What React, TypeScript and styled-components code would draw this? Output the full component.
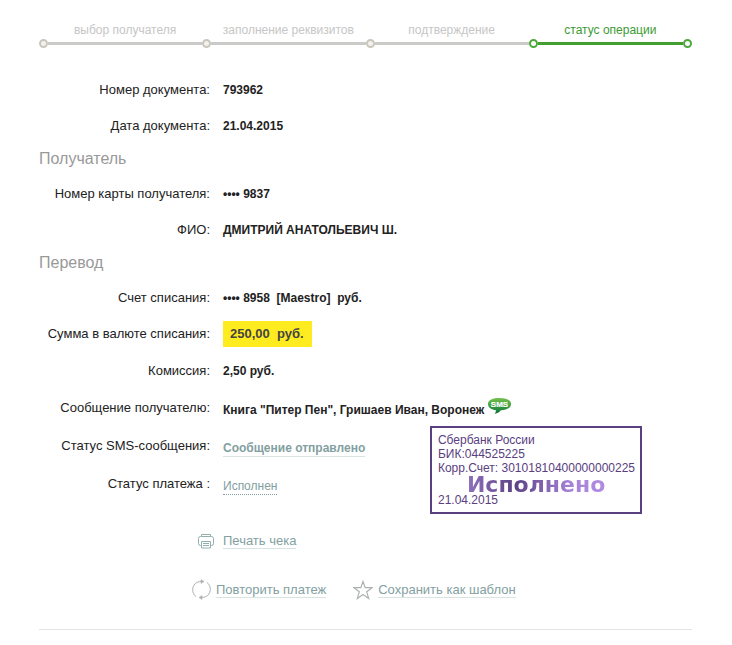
import React from 'react';
import styled, { createGlobalStyle, css } from 'styled-components';

const GlobalStyle = createGlobalStyle`
  * { box-sizing: border-box; }
  body {
    margin: 0;
    background: #ffffff;
    color: #222222;
    font-family: "Liberation Sans", Arial, sans-serif;
    font-size: 13px;
    line-height: 16px;
  }
`;

const Page = styled.main`
  padding: 22px 40px 16px 39px;
`;

const Stepper = styled.ol`
  display: grid;
  grid-template-columns: repeat(4, 1fr);
  margin: 0 0 24px;
  padding: 0;
  list-style: none;
`;

const StepItem = styled.li<{ $active: boolean }>`
  color: ${(p) => (p.$active ? '#3c9a32' : '#c6c6c6')};
  font-size: 12px;
`;

const StepLabel = styled.div<{ $active: boolean }>`
  padding-left: ${(p) => (p.$active ? 0 : 9)}px;
  text-align: center;
`;

const Track = styled.div<{ $active: boolean }>`
  display: flex;
  align-items: center;
  height: 10px;
  color: ${(p) => (p.$active ? '#429f30' : '#cacac8')};
`;

const Dot = styled.span<{ $active: boolean }>`
  flex: none;
  width: 9px;
  height: 9px;
  border: 2px solid ${(p) => (p.$active ? '#4da83c' : '#c9c6bb')};
  border-radius: 50%;
  background: ${(p) => (p.$active ? '#ffffff' : '#f2f1ee')};
`;

const Line = styled.span`
  flex: 1;
  height: 3px;
  background: currentColor;
`;

const Fields = styled.dl`
  margin: 0;
`;

const StatusFields = styled(Fields)`
  padding-top: 1px;
`;

const Row = styled.div<{ $tall?: boolean }>`
  display: grid;
  grid-template-columns: 171px 1fr;
  column-gap: 13px;
  align-items: center;
  min-height: ${(p) => (p.$tall ? 38 : 36)}px;
`;

const Label = styled.dt`
  text-align: right;
  white-space: nowrap;
`;

const Value = styled.dd<{ $low?: boolean }>`
  margin: 0;
  padding-top: ${(p) => (p.$low ? 4 : 0)}px;
  font-size: 12px;
  font-weight: bold;
  white-space: pre;
`;

const SectionTitle = styled.h2`
  margin: 0;
  height: 32px;
  color: #999999;
  font-size: 16px;
  font-weight: normal;
  line-height: 30px;
`;

const Highlight = styled.strong`
  display: block;
  width: fit-content;
  padding: 0 8px 0 7px;
  background: #ffec20;
  color: #444444;
  font-size: 13px;
  line-height: 26px;
`;

const linkStyle = css`
  color: #82a0a1;
  text-decoration: none;
  line-height: 15px;
`;

const TextLink = styled.a`
  ${linkStyle}
  display: inline-block;
  border-bottom: 1px solid #d9e3e2;
`;

const StatusLink = styled.a`
  ${linkStyle}
  display: inline-block;
  border-bottom: 1px dotted #82a0a1;
  font-weight: normal;
`;

const Message = styled.div`
  display: flex;
  align-items: center;
  gap: 3px;
`;

const SmsIcon = styled.svg`
  flex: none;
  margin: -8px 0 0;
`;

const StatusArea = styled.div`
  display: flex;
  justify-content: space-between;
  align-items: flex-start;
  margin-right: 50px;
`;

const Stamp = styled.aside`
  position: relative;
  flex: none;
  padding: 5px 5px 5px 6px;
  border: 2px solid #5a4080;
  color: #5a4080;
  font-size: 12px;
  line-height: 14px;

  p { margin: 0; }
`;

const StampWord = styled.strong`
  position: absolute;
  top: 43px;
  left: 35px;
  background: linear-gradient(90deg, #8f70bd 0%, #5d4286 35%, #a681d6 75%, #b18be2 100%);
  background-clip: text;
  -webkit-background-clip: text;
  color: transparent;
  font: bold 22px/28px "DejaVu Sans", sans-serif;
`;

const StampDate = styled.p`
  padding-top: 18px;
`;

const Action = styled.div`
  display: flex;
  align-items: center;
  gap: 5px;
`;

const PrintAction = styled(Action)`
  gap: 9px;
  margin: 19px 0 0 159px;
`;

const Actions = styled.div`
  display: flex;
  gap: 27px;
  margin: 30px 0 0 153px;
  padding-bottom: 29px;
`;

const Divider = styled.hr`
  margin: 0;
  border: 0;
  border-top: 1px solid #e3e5e5;
`;

const steps = ['выбор получателя', 'заполнение реквизитов', 'подтверждение', 'статус операции'];

function Steps() {
  return (
    <Stepper>
      {steps.map((label, i) => {
        const active = i === steps.length - 1;
        return (
          <StepItem key={label} $active={active} aria-current={active ? 'step' : undefined}>
            <StepLabel $active={active}>{label}</StepLabel>
            <Track $active={active}>
              <Dot $active={active} />
              <Line />
              {active && <Dot $active />}
            </Track>
          </StepItem>
        );
      })}
    </Stepper>
  );
}

type FieldProps = { label: string; tall?: boolean; low?: boolean; children: React.ReactNode };

function Field({ label, tall, low, children }: FieldProps) {
  return (
    <Row $tall={tall}>
      <Label>{label}</Label>
      <Value $low={low}>{children}</Value>
    </Row>
  );
}

function Sms() {
  return (
    <SmsIcon width="24" height="18" viewBox="0 0 24 18" role="img" aria-label="SMS">
      <defs>
        <linearGradient id="sms" x1="0" y1="0" x2="0" y2="1">
          <stop offset="0" stopColor="#78c04e" />
          <stop offset="0.75" stopColor="#1f8a3c" />
          <stop offset="1" stopColor="#0c6b35" />
        </linearGradient>
      </defs>
      <path
        d="M12.500 1C6 1 1 2.800 1 7c0 3.700 3.500 5.800 8 6.200 0 1.500-.6 2.500-1.500 3.600 3.200-.4 5.300-1.800 6.300-3.600C19.500 13 24 11 24 7c0-4.200-5-6-11.500-6z"
        fill="url(#sms)"
      />
      <text x="12.500" y="10" textAnchor="middle" fontSize="8" fontFamily="Liberation Sans, Arial, sans-serif" fill="#fff" stroke="#fff" strokeWidth="0.2">SMS</text>
    </SmsIcon>
  );
}

function PrinterIcon() {
  return (
    <svg width="16" height="15" viewBox="0 0 16 15" fill="none" stroke="#93b0ae" aria-hidden="true">
      <path d="M3.500 2.500V.5h9v2" />
      <path d="M3.500 11.500h-1a2 2 0 0 1-2-2v-5a2 2 0 0 1 2-2h11a2 2 0 0 1 2 2v5a2 2 0 0 1-2 2h-1" />
      <path d="M3.500 7.500h9v6.500h-9zM5 9.500h6M5 11.500h6" />
    </svg>
  );
}

function RepeatIcon() {
  return (
    <svg width="19" height="21" viewBox="0 0 19 21" fill="none" stroke="#adb1b1" aria-hidden="true">
      <path d="M4 17.500C1.800 16 .7 13.500.7 10.500c0-4.500 3.600-8 8.300-8h2M15 3.500c2.200 1.500 3.300 4 3.300 7 0 4.500-3.600 8-8.300 8H8" />
      <path d="M9 .5l3 2-3 2zM10 16.500l-3 2 3 2z" fill="#adb1b1" strokeWidth="0.5" />
    </svg>
  );
}

function StarIcon() {
  return (
    <svg width="20" height="20" viewBox="0 0 20 20" fill="none" stroke="#adb1b1" strokeWidth="1.200" aria-hidden="true">
      <path d="M10 1.500l2.200 6.200H19l-5.300 4.100 2 6.700L10 14.500l-5.700 4 2-6.700L1 7.700h6.800z" />
    </svg>
  );
}

export default function App() {
  return (
    <>
      <GlobalStyle />
      <Page>
        <Steps />
        <Fields>
          <Field label="Номер документа:">793962</Field>
          <Field label="Дата документа:">21.04.2015</Field>
        </Fields>

        <SectionTitle>Получатель</SectionTitle>
        <Fields>
          <Field label="Номер карты получателя:">•••• 9837</Field>
          <Field label="ФИО:">ДМИТРИЙ АНАТОЛЬЕВИЧ Ш.</Field>
        </Fields>

        <SectionTitle>Перевод</SectionTitle>
        <Fields>
          <Field label="Счет списания:">{'•••• 8958  [Maestro]  руб.'}</Field>
          <Field label="Сумма в валюте списания:">
            <Highlight>{'250,00  руб.'}</Highlight>
          </Field>
          <Field label="Комиссия:" tall>2,50 руб.</Field>
          <Field label="Сообщение получателю:" low>
            <Message>
              <span>Книга "Питер Пен", Гришаев Иван, Воронеж</span>
              <Sms />
            </Message>
          </Field>
        </Fields>

        <StatusArea>
          <StatusFields>
            <Field label="Статус SMS-сообщения:" tall low>
              <TextLink href="#sms">Сообщение отправлено</TextLink>
            </Field>
            <Field label="Статус платежа :" tall low>
              <StatusLink href="#status">Исполнен</StatusLink>
            </Field>
          </StatusFields>
          <Stamp>
            <p>Сбербанк России</p>
            <p>БИК:044525225</p>
            <p>Корр.Счет: 30101810400000000225</p>
            <StampDate>21.04.2015</StampDate>
            <StampWord>Исполнено</StampWord>
          </Stamp>
        </StatusArea>

        <PrintAction>
          <PrinterIcon />
          <TextLink href="#print">Печать чека</TextLink>
        </PrintAction>

        <Actions>
          <Action>
            <RepeatIcon />
            <TextLink href="#repeat">Повторить платеж</TextLink>
          </Action>
          <Action>
            <StarIcon />
            <TextLink href="#template">Сохранить как шаблон</TextLink>
          </Action>
        </Actions>
        <Divider />
      </Page>
    </>
  );
}
